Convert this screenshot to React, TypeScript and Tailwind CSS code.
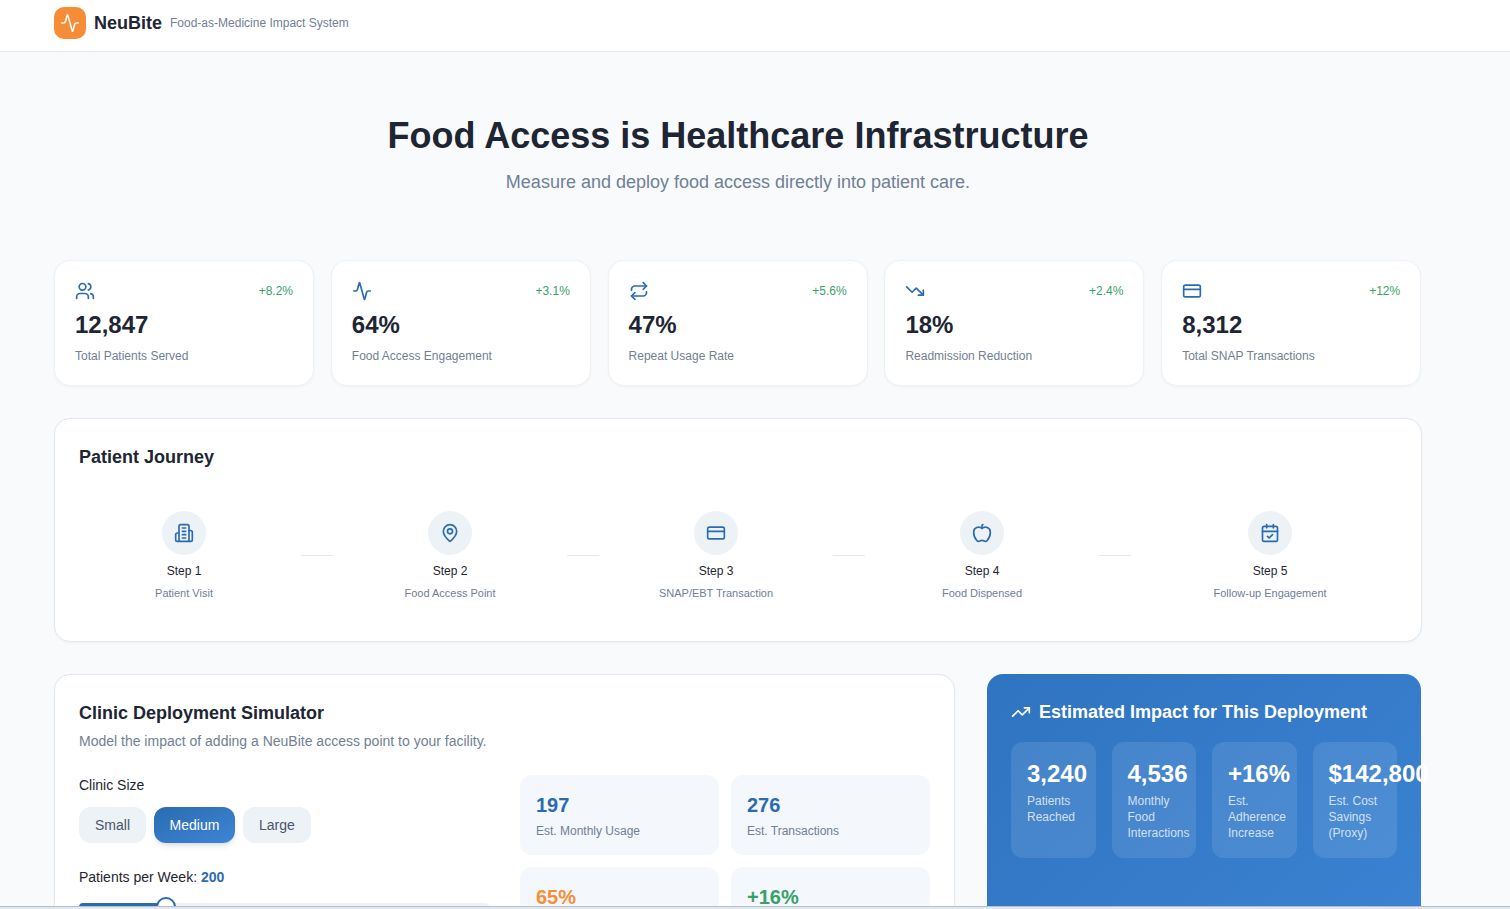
import { Activity, Users, Repeat, TrendingDown, TrendingUp, CreditCard, MapPin, Apple, CalendarCheck } from 'lucide-react';

const HospitalIcon = ({ className }: { className?: string }) => (
  <svg className={className} viewBox="0 0 24 24" fill="none" stroke="currentColor" strokeWidth={2} strokeLinecap="round" strokeLinejoin="round">
    <path d="M6 22V4a2 2 0 0 1 2-2h8a2 2 0 0 1 2 2v18Z" />
    <path d="M6 12H4a2 2 0 0 0-2 2v6a2 2 0 0 0 2 2h2" />
    <path d="M18 9h2a2 2 0 0 1 2 2v9a2 2 0 0 1-2 2h-2" />
    <path d="M10 6h4" />
    <path d="M10 10h4" />
    <path d="M10 14h4" />
    <path d="M10 18h4" />
  </svg>
);

const stats = [
  { icon: Users, delta: '+8.2%', value: '12,847', label: 'Total Patients Served' },
  { icon: Activity, delta: '+3.1%', value: '64%', label: 'Food Access Engagement' },
  { icon: Repeat, delta: '+5.6%', value: '47%', label: 'Repeat Usage Rate' },
  { icon: TrendingDown, delta: '+2.4%', value: '18%', label: 'Readmission Reduction' },
  { icon: CreditCard, delta: '+12%', value: '8,312', label: 'Total SNAP Transactions' },
];

const steps = [
  { icon: HospitalIcon, step: 'Step 1', label: 'Patient Visit' },
  { icon: MapPin, step: 'Step 2', label: 'Food Access Point' },
  { icon: CreditCard, step: 'Step 3', label: 'SNAP/EBT Transaction' },
  { icon: Apple, step: 'Step 4', label: 'Food Dispensed' },
  { icon: CalendarCheck, step: 'Step 5', label: 'Follow-up Engagement' },
];

const impact = [
  { value: '3,240', label: 'Patients Reached' },
  { value: '4,536', label: 'Monthly Food Interactions' },
  { value: '+16%', label: 'Est. Adherence Increase' },
  { value: '$142,800', label: 'Est. Cost Savings (Proxy)' },
];

const tiles = [
  { value: '197', label: 'Est. Monthly Usage', color: 'text-[#2b6cb0]' },
  { value: '276', label: 'Est. Transactions', color: 'text-[#2b6cb0]' },
  { value: '65%', label: 'Repeat Usage', color: 'text-[#f78e36]' },
  { value: '+16%', label: 'Adherence Lift', color: 'text-[#38a169]' },
];

export default function App() {
  return (
    <div className="h-[909px] overflow-hidden bg-[#e2e8f0] font-['Liberation_Sans',Arial,sans-serif] text-[#1e2533]">
      <div className="h-[907px] overflow-hidden border-b border-[#b6bec9] bg-[#f8fafc]">
        <header className="flex h-[52px] items-start border-b border-[#e2e8f0] bg-white pt-[7px] pl-[54px]">
          <div className="flex h-8 w-8 items-center justify-center rounded-[10px] bg-[#f68d36]">
            <Activity className="h-5 w-5 text-white" strokeWidth={1.75} />
          </div>
          <span className="ml-2 text-lg leading-8 font-bold">NeuBite</span>
          <span className="ml-2 text-xs leading-8 text-[#718096]">Food-as-Medicine Impact System</span>
        </header>

        <main className="ml-[54px] w-[1368px]">
          <section className="flex h-[208px] flex-col items-center pt-[61px]">
            <h1 className="text-4xl leading-[46px] font-bold">Food Access is Healthcare Infrastructure</h1>
            <p className="mt-[10px] text-lg leading-[26px] text-[#718096]">Measure and deploy food access directly into patient care.</p>
          </section>

          <section className="grid grid-cols-5 gap-4">
            {stats.map((s) => (
              <div key={s.label} className="h-[126px] w-[260px] rounded-2xl border border-[#edf2f7] bg-white px-5 pt-5 shadow-[0_1px_3px_rgba(0,0,0,0.04)]">
                <div className="flex items-center justify-between">
                  <s.icon className="h-5 w-5 text-[#2b6cb0]" />
                  <span className="text-xs text-[#38a169]">{s.delta}</span>
                </div>
                <div className="mt-2 text-2xl leading-8 font-bold">{s.value}</div>
                <div className="mt-[7px] text-xs leading-4 text-[#718096]">{s.label}</div>
              </div>
            ))}
          </section>

          <section className="mt-8 h-[224px] rounded-2xl border border-[#e2e8f0] bg-white px-6 pt-6 shadow-[0_1px_3px_rgba(0,0,0,0.04)]">
            <h2 className="text-lg leading-7 font-bold">Patient Journey</h2>
            <div className="mt-10 flex items-start">
              {steps.map((s, i) => (
                <div key={s.step} className="contents">
                  <div className={i < steps.length - 1 ? 'flex w-[210px] flex-col items-center' : 'flex flex-1 flex-col items-center'}>
                    <div className="flex h-11 w-11 items-center justify-center rounded-full bg-[#edf2f7]">
                      <s.icon className="h-5 w-5 text-[#2b6cb0]" />
                    </div>
                    <div className="mt-[6px] text-xs leading-5">{s.step}</div>
                    <div className="mt-[2px] text-[11px] leading-5 text-[#718096]">{s.label}</div>
                  </div>
                  {i < steps.length - 1 && <div className="mx-3 mt-11 h-px w-8 shrink-0 bg-[#e2e8f0]" />}
                </div>
              ))}
            </div>
          </section>

          <section className="mt-8 grid grid-cols-[901px_434px] gap-8">
            <div className="h-[400px] rounded-2xl border border-[#e2e8f0] bg-white p-6 shadow-[0_1px_3px_rgba(0,0,0,0.04)]">
              <h2 className="text-lg leading-7 font-bold">Clinic Deployment Simulator</h2>
              <p className="mt-1 text-sm leading-5 text-[#718096]">Model the impact of adding a NeuBite access point to your facility.</p>
              <div className="mt-6 grid grid-cols-2 gap-[31px]">
                <div>
                  <div className="text-sm leading-5">Clinic Size</div>
                  <div className="mt-3 flex gap-2">
                    <button className="h-9 rounded-xl bg-[#edf2f7] px-4 text-sm text-[#4a5568]">Small</button>
                    <button className="h-9 w-[81px] rounded-xl bg-gradient-to-br from-[#2b6cb0] to-[#3d85d6] text-sm text-white shadow-md">Medium</button>
                    <button className="h-9 rounded-xl bg-[#edf2f7] px-4 text-sm text-[#4a5568]">Large</button>
                  </div>
                  <div className="mt-6 text-sm leading-5">
                    Patients per Week: <span className="font-bold text-[#2b6cb0]">200</span>
                  </div>
                  <div className="relative mt-4 h-2 rounded-full bg-[#edf2f7]">
                    <div className="h-full w-[88px] rounded-full bg-[#2b6cb0]" />
                    <div className="absolute top-[-6px] left-[77px] h-5 w-5 rounded-full border-2 border-[#2b6cb0] bg-white" />
                  </div>
                </div>
                <div className="grid grid-cols-2 gap-3">
                  {tiles.map((t) => (
                    <div key={t.label} className="h-20 rounded-xl bg-[#f4f7fb] p-4">
                      <div className={`text-xl leading-7 font-bold ${t.color}`}>{t.value}</div>
                      <div className="mt-1 text-xs leading-4 text-[#718096]">{t.label}</div>
                    </div>
                  ))}
                </div>
              </div>
            </div>

            <div className="h-[400px] rounded-2xl bg-gradient-to-br from-[#2f74c0] to-[#3d85d6] p-6 text-white">
              <h2 className="flex items-center gap-2 text-lg leading-7 font-bold">
                <TrendingUp className="h-5 w-5" />
                Estimated Impact for This Deployment
              </h2>
              <div className="mt-4 grid grid-cols-4 gap-4">
                {impact.map((t) => (
                  <div key={t.value} className="h-[116px] rounded-xl bg-white/10 p-4">
                    <div className="text-2xl leading-8 font-bold whitespace-nowrap">{t.value}</div>
                    <div className="mt-[3px] text-xs leading-4 text-white/75">{t.label}</div>
                  </div>
                ))}
              </div>
            </div>
          </section>
        </main>
      </div>
    </div>
  );
}
